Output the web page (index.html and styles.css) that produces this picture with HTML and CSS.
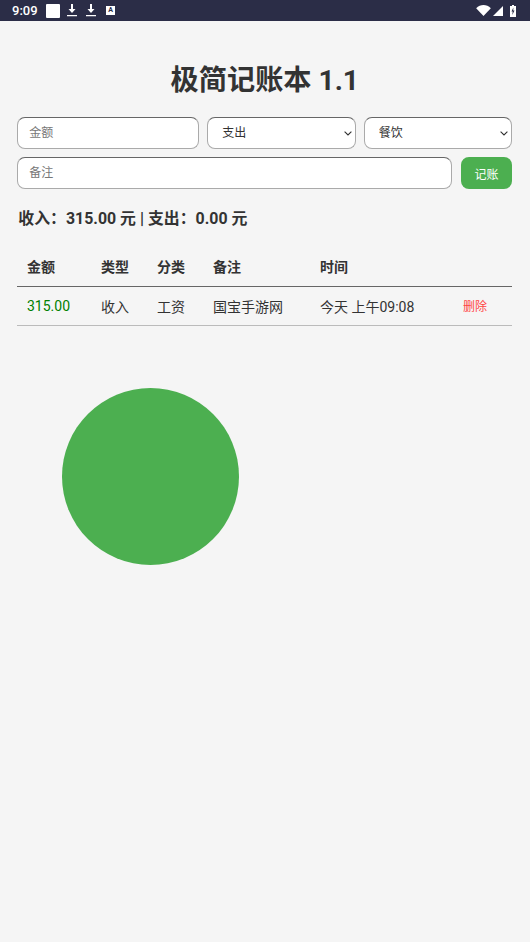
FILE: index.html
```html
<!DOCTYPE html>
<html lang="zh-CN">
<head>
  <meta charset="UTF-8">
  <meta name="viewport" content="width=device-width, initial-scale=1.0">
  <title>极简记账本 1.1</title>
  <link rel="stylesheet" href="styles.css">
</head>
<body>

  <div class="status-bar">
    <div class="status-left">
      <span class="status-time">9:09</span>
      <span class="status-square"></span>
      <svg class="status-icon dl-first" width="10" height="13" viewBox="0 0 10 13"><path d="M4 0h2v5h2.500L5 9 1.500 5H4zM0 11h10v1.300H0z" fill="#fff"/></svg>
      <svg class="status-icon dl-second" width="10" height="13" viewBox="0 0 10 13"><path d="M4 0h2v5h2.500L5 9 1.500 5H4zM0 11h10v1.300H0z" fill="#fff"/></svg>
      <span class="status-app">A</span>
    </div>
    <div class="status-right">
      <svg width="15" height="11" viewBox="0 0 16 12"><path d="M0 3.500C4.500-1 11.500-1 16 3.500L8 12z" fill="#fff"/></svg>
      <svg class="signal" width="10" height="10" viewBox="0 0 11 11"><path d="M11 0v11H0z" fill="#fff"/></svg>
      <svg class="battery" width="6" height="12" viewBox="0 0 6 12"><path d="M2 0h2v1h2v11H0V1h2z" fill="#fff"/><path d="M3.400 2.500 1.500 6.500h1.200L2.300 10l2.200-4.500H3.200z" fill="#2b2d47"/></svg>
    </div>
  </div>

  <div class="container">
    <h1>极简记账本 1.1</h1>

    <div class="form-row">
      <input class="amount-input" type="text" placeholder="金额">
      <select class="type-select">
        <option>支出</option>
        <option>收入</option>
      </select>
      <select class="type-select">
        <option>餐饮</option>
        <option>工资</option>
      </select>
    </div>

    <div class="form-row">
      <input class="note-input" type="text" placeholder="备注">
      <button class="submit-button">记账</button>
    </div>

    <div class="summary">收入：315.00 元 | 支出：0.00 元</div>

    <table>
      <thead>
        <tr>
          <th class="col-amount">金额</th>
          <th class="col-type">类型</th>
          <th class="col-type">分类</th>
          <th class="col-note">备注</th>
          <th class="col-time">时间</th>
          <th></th>
        </tr>
      </thead>
      <tbody>
        <tr>
          <td class="income">315.00</td>
          <td>收入</td>
          <td>工资</td>
          <td>国宝手游网</td>
          <td>今天 上午09:08</td>
          <td><span class="delete-link">删除</span></td>
        </tr>
      </tbody>
    </table>

    <div class="chart"></div>
  </div>

</body>
</html>
```

FILE: styles.css
```css
* {
  box-sizing: border-box;
}

body {
  margin: 0;
  font-family: Roboto, "Noto Sans CJK SC", sans-serif;
  background-color: #f5f5f5;
  color: #333;
}

.status-bar {
  height: 21px;
  padding: 0 13px 0 12px;
  background-color: #2b2d47;
  color: white;
  display: flex;
  justify-content: space-between;
  align-items: center;
}

.status-left,
.status-right {
  display: flex;
  align-items: center;
}

.status-time {
  font-size: 13px;
  font-weight: 500;
  width: 34px;
}

.status-square {
  width: 14px;
  height: 14px;
  border-radius: 1px;
  background-color: white;
}

.dl-first {
  margin-left: 7px;
}

.dl-second {
  margin-left: 9px;
}

.status-app {
  width: 9px;
  height: 9px;
  margin-left: 10px;
  background-color: white;
  color: #2b2d47;
  font-size: 7px;
  font-weight: bold;
  line-height: 9px;
  text-align: center;
}

.signal {
  margin-left: 2px;
}

.battery {
  margin-left: 7px;
  margin-right: 1px;
}

.container {
  padding: 0 17.7px 0 17.3px;
}

h1 {
  margin: 0;
  padding-top: 42px;
  height: 96px;
  font-size: 28.2px;
  line-height: 36px;
  text-align: center;
  font-weight: bold;
}

.form-row {
  display: flex;
  gap: 8px;
  margin-bottom: 8px;
}

input,
select {
  height: 32px;
  border: 1px solid #aaa;
  border-top-color: #666;
  border-radius: 8px;
  background-color: white;
  font-family: inherit;
  font-size: 12px;
  color: #333;
}

input {
  padding: 0 11px;
}

input::placeholder {
  color: #777;
}

select {
  appearance: none;
  padding: 0 14px;
  width: 148.6px;
  background-image: url("data:image/svg+xml,%3Csvg xmlns='http://www.w3.org/2000/svg' width='8' height='5'%3E%3Cpath d='M.6.6 4 4 7.400.6' fill='none' stroke='%23333' stroke-width='1.100'/%3E%3C/svg%3E");
  background-repeat: no-repeat;
  background-position: right 3px center;
}

.amount-input {
  flex: 1;
}

.note-input {
  flex: 1;
}

.submit-button {
  width: 51.6px;
  height: 32px;
  margin-left: 1px;
  border: none;
  border-radius: 8px;
  background-color: #4caf50;
  color: white;
  font-family: inherit;
  font-size: 12px;
}

.summary {
  margin: 19px 0 0 1px;
  font-size: 15.9px;
  line-height: 22px;
  font-weight: bold;
}

table {
  width: 100%;
  margin-top: 19px;
  border-collapse: collapse;
  table-layout: fixed;
  font-size: 14px;
}

th,
td {
  padding: 0 0 0 9.700px;
  text-align: left;
}

th {
  height: 37px;
  padding-bottom: 2px;
  font-weight: bold;
  border-bottom: 1px solid #666;
}

td {
  height: 39px;
  border-bottom: 1px solid #bbb;
}

.col-amount {
  width: 74px;
}

.col-type {
  width: 56px;
}

.col-note {
  width: 107px;
}

.col-time {
  width: 143px;
}

.income {
  color: green;
}

.delete-link {
  color: #ff4444;
  font-size: 12px;
}

.chart {
  width: 177px;
  height: 177px;
  margin: 62px 0 0 44.400px;
  border-radius: 50%;
  background-color: #4caf50;
}
```
